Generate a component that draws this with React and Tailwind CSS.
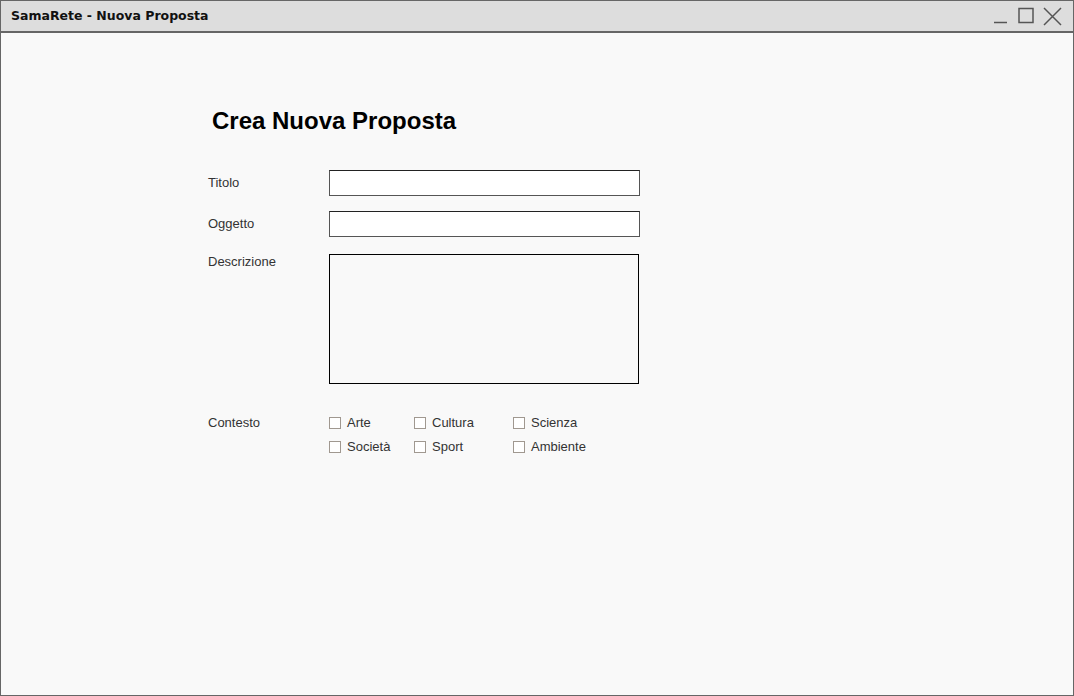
import React from 'react';

function WindowControls() {
  return (
    <div className="flex items-center gap-[9px] pr-[11px]">
      {/* minimize */}
      <svg width="16" height="18" viewBox="0 0 16 18">
        <line x1="1" y1="15.5" x2="14" y2="15.5" stroke="#555" strokeWidth="1.5" />
      </svg>
      {/* maximize */}
      <svg width="16" height="18" viewBox="0 0 16 18">
        <rect x="1" y="1.5" width="14" height="14" fill="none" stroke="#555" strokeWidth="1.5" />
      </svg>
      {/* close */}
      <svg width="19" height="19" viewBox="0 0 19 19">
        <path d="M1 1 L18 18 M18 1 L1 18" stroke="#555" strokeWidth="1.5" />
      </svg>
    </div>
  );
}

function Checkbox({ label }) {
  return (
    <label className="flex items-center gap-[6px] text-[13px] text-[#333]">
      <span className="w-[12px] h-[12px] border border-[#a09890] bg-white"></span>
      <span>{label}</span>
    </label>
  );
}

export default function App() {
  return (
    <div
      className="w-[1074px] h-[696px] flex flex-col border border-[#666] bg-[#f9f9f9]"
      style={{ fontFamily: '"Liberation Sans", Arial, sans-serif' }}
    >
      {/* Title bar */}
      <div className="h-[32px] flex items-center justify-between bg-[#dddddd] border-b-2 border-[#666] shrink-0">
        <span
          className="pl-[10px] text-[12.5px] font-bold text-[#111]"
          style={{ fontFamily: '"DejaVu Sans", Tahoma, sans-serif' }}
        >
          SamaRete - Nuova Proposta
        </span>
        <WindowControls />
      </div>

      {/* Content */}
      <div className="flex-1 pl-[207px] pt-[73px]">
        <h1 className="pl-[4px] text-[24px] font-bold text-black leading-[30px]">Crea Nuova Proposta</h1>

        <div className="mt-[34px] flex flex-col">
          <div className="flex items-center h-[26px]">
            <span className="w-[121px] text-[13px] text-[#333]">Titolo</span>
            <div className="w-[311px] h-[26px] bg-white border border-[#555] border-t-[#222]"></div>
          </div>

          <div className="flex items-center h-[26px] mt-[15px]">
            <span className="w-[121px] text-[13px] text-[#333]">Oggetto</span>
            <div className="w-[311px] h-[26px] bg-white border border-[#555] border-t-[#222]"></div>
          </div>

          <div className="flex mt-[17px]">
            <span className="w-[121px] text-[13px] text-[#333] leading-[16px]">Descrizione</span>
            <div className="w-[310px] h-[130px] border border-black"></div>
          </div>

          <div className="flex mt-[31px]">
            <span className="w-[121px] text-[13px] text-[#333] leading-[16px]">Contesto</span>
            <div className="grid grid-cols-[85px_99px_90px] gap-y-[8px] leading-[16px]">
              <Checkbox label="Arte" />
              <Checkbox label="Cultura" />
              <Checkbox label="Scienza" />
              <Checkbox label="Società" />
              <Checkbox label="Sport" />
              <Checkbox label="Ambiente" />
            </div>
          </div>
        </div>
      </div>
    </div>
  );
}
